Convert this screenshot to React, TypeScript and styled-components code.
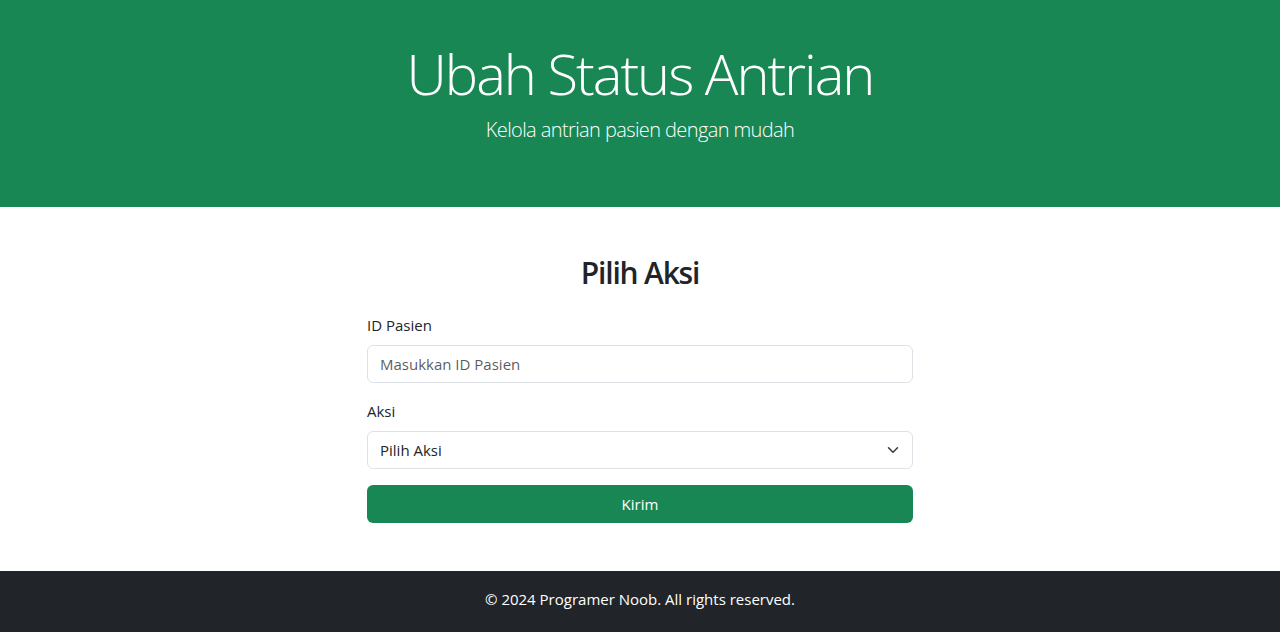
import styled, { createGlobalStyle } from "styled-components";

const GlobalStyle = createGlobalStyle`
  * { box-sizing: border-box; }
  body {
    margin: 0;
    font-family: "Open Sans", "Noto Sans", sans-serif;
    font-size: 16px;
    line-height: 1.5;
    color: #212529;
    background: #fff;
  }
`;

const Page = styled.div`
  min-height: 632px;
  display: flex;
  flex-direction: column;
`;

const Hero = styled.header`
  background-color: #198754;
  color: #fff;
  text-align: center;
  padding: 40px 0 62px;
`;

const HeroTitle = styled.h1`
  margin: 0 0 8px;
  font-size: 56px;
  font-weight: 300;
  line-height: 1.2;
  letter-spacing: -2px;
`;

const Lead = styled.p`
  margin: 0;
  font-size: 20px;
  font-weight: 300;
  line-height: 1.5;
  letter-spacing: -0.6px;
`;

const Main = styled.main`
  flex: 1;
  display: flex;
  justify-content: center;
  padding: 48px 0 46px;
`;

const FormCard = styled.form`
  width: 546px;
  display: flex;
  flex-direction: column;
`;

const SectionTitle = styled.h2`
  margin: 0 0 22px;
  font-size: 30px;
  font-weight: 600;
  line-height: 1.2;
  letter-spacing: -1.2px;
  text-align: center;
  color: #212529;
`;

const Field = styled.div`
  display: flex;
  flex-direction: column;
  margin-bottom: 16px;
`;

const Label = styled.label`
  font-size: 15px;
  line-height: 24px;
  margin-bottom: 8px;
`;

const Input = styled.input`
  height: 38px;
  padding: 6px 12px;
  font: inherit;
  font-size: 15px;
  color: #212529;
  border: 1px solid #dee2e6;
  border-radius: 6px;
  outline: none;
  &::placeholder {
    color: rgba(33, 37, 41, 0.75);
  }
`;

const SelectWrap = styled.div`
  position: relative;
`;

const Select = styled.select`
  width: 100%;
  height: 38px;
  padding: 6px 36px 6px 12px;
  font: inherit;
  font-size: 15px;
  color: #212529;
  background: #fff;
  border: 1px solid #dee2e6;
  border-radius: 6px;
  appearance: none;
  outline: none;
`;

const Chevron = styled.svg`
  position: absolute;
  right: 12px;
  top: 13px;
  width: 16px;
  height: 12px;
  pointer-events: none;
`;

const SubmitButton = styled.button`
  height: 38px;
  border: 0;
  border-radius: 6px;
  background-color: #198754;
  color: #fff;
  font: inherit;
  font-size: 15px;
  cursor: pointer;
`;

const Footer = styled.footer`
  background-color: #212529;
  color: #fff;
  text-align: center;
  padding: 16px 0 21px;
  font-size: 15px;
  line-height: 24px;
`;

function App() {
  return (
    <Page>
      <GlobalStyle />
      <Hero>
        <HeroTitle>Ubah Status Antrian</HeroTitle>
        <Lead>Kelola antrian pasien dengan mudah</Lead>
      </Hero>
      <Main>
        <FormCard onSubmit={(e) => e.preventDefault()}>
          <SectionTitle>Pilih Aksi</SectionTitle>
          <Field>
            <Label htmlFor="idPasien">ID Pasien</Label>
            <Input id="idPasien" placeholder="Masukkan ID Pasien" />
          </Field>
          <Field>
            <Label htmlFor="aksi">Aksi</Label>
            <SelectWrap>
              <Select id="aksi" defaultValue="">
                <option value="">Pilih Aksi</option>
                <option value="panggil">Panggil</option>
                <option value="selesai">Selesai</option>
              </Select>
              <Chevron viewBox="0 0 16 16">
                <path
                  d="m2 5 6 6 6-6"
                  fill="none"
                  stroke="#343a40"
                  strokeWidth="2"
                  strokeLinecap="round"
                  strokeLinejoin="round"
                />
              </Chevron>
            </SelectWrap>
          </Field>
          <SubmitButton type="submit">Kirim</SubmitButton>
        </FormCard>
      </Main>
      <Footer>© 2024 Programer Noob. All rights reserved.</Footer>
    </Page>
  );
}

export default App;
